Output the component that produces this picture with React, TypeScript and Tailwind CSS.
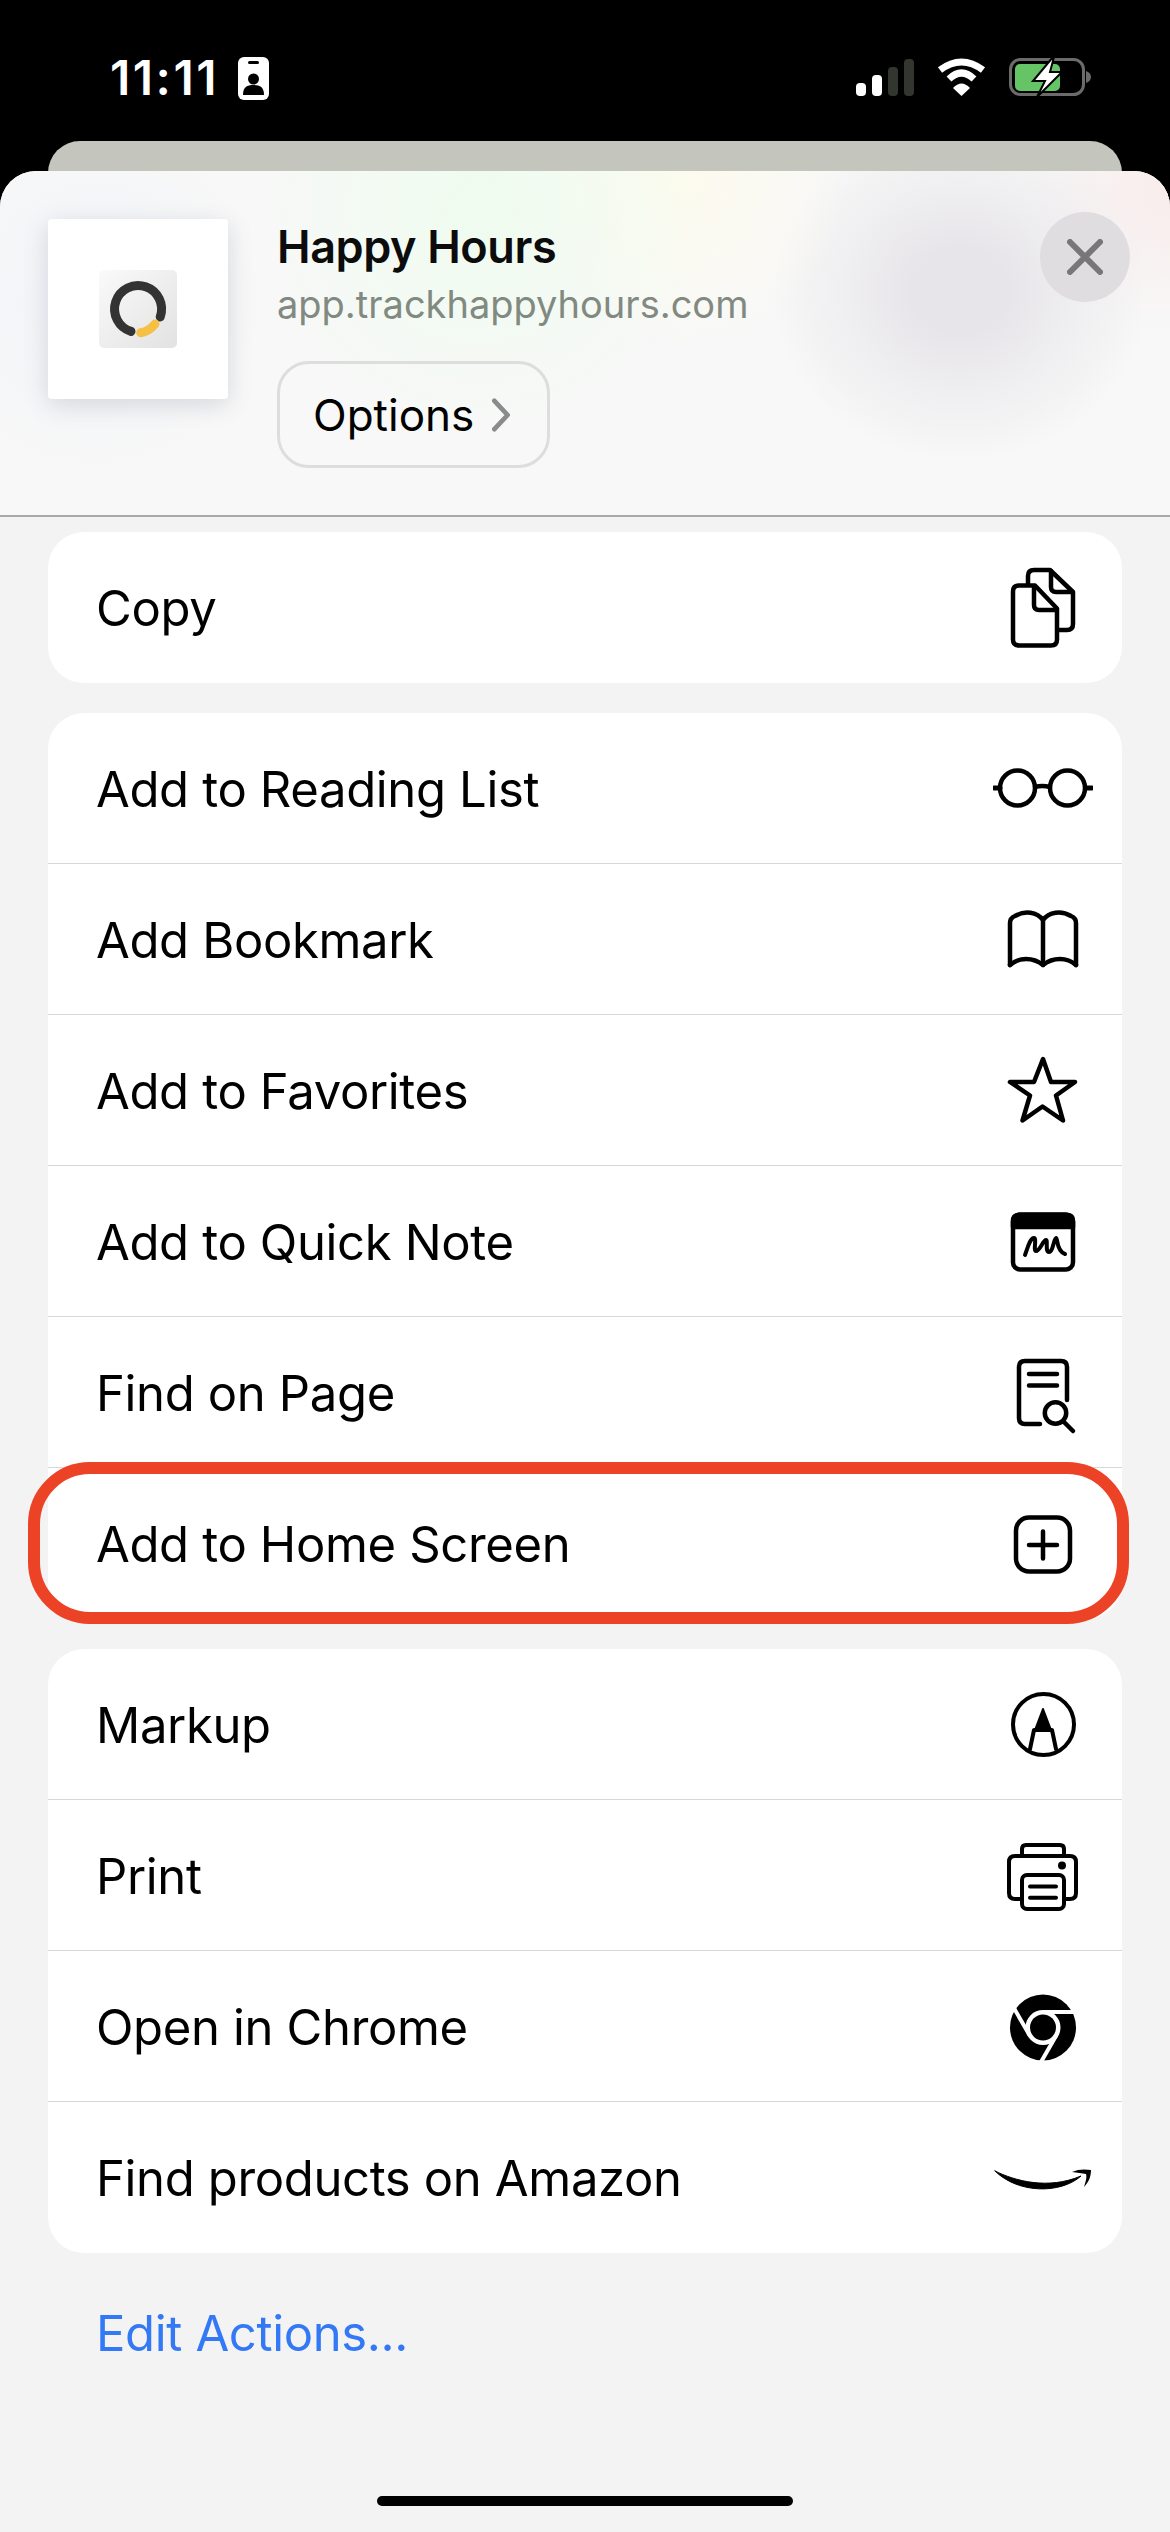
import type { ReactNode } from 'react'

const FONT = "font-['Inter','Liberation_Sans',sans-serif]"

function Icon({ children }: { children: ReactNode }) {
  return (
    <svg viewBox="0 0 100 100" className="h-[100px] w-[100px]" fill="none" stroke="#000" strokeWidth={4.500} strokeLinecap="round" strokeLinejoin="round">
      {children}
    </svg>
  )
}

const CopyIcon = () => (
  <Icon>
    <path d="M35 26v-8q0-6 6-6h16l23 22v32q0 6-6 6h-8" />
    <path d="M58 13v16q0 5 5 5h16" />
    <path d="M26 27.500h16l22 23v31q0 6-6 6H26q-6 0-6-6v-48q0-6 6-6z" />
    <path d="M41 28v19q0 5 5 5h17" />
  </Icon>
)
const GlassesIcon = () => (
  <Icon>
    <circle cx="24.500" cy="50" r="17.500" />
    <circle cx="74.500" cy="50" r="17.500" />
    <path d="M42 49q7-2 15 0" />
    <path d="M1 50h6M93 50h6" strokeWidth={5} />
  </Icon>
)
const BookIcon = () => (
  <Icon>
    <path d="M17 76V34q0-5 5-7c10-6 22-4 28 4 6-8 18-10 28-4q5 2 5 7v42" />
    <path d="M17 76c9-8 23-8 33 0 10-8 24-8 33 0" />
    <path d="M50 31v45" />
  </Icon>
)
const StarIcon = () => (
  <Icon>
    <path d="M50 19l8 23h24L63 55.500l7 25L49.500 66.500 29.500 80.500l7.500-25L17 42h24z" />
  </Icon>
)
const NoteIcon = () => (
  <Icon>
    <rect x="20" y="23.500" width="60" height="55" rx="7" />
    <path d="M20 30q0-6 6-6h48q6 0 6 6v6H20z" fill="#000" />
    <path d="M32 64c3-8 5-17 9-17 3 0-1 13 2 13 4 0 7-11 10-11 2 0-1 12 3 12 4 0 5-14 7-14 2 0 0 13 9 16" strokeWidth={4} />
  </Icon>
)
const FindIcon = () => (
  <Icon>
    <path d="M47 82H32q-6 0-6-6V25q0-6 6-6h36q6 0 6 6v33" />
    <path d="M36 32h28M36 43.500h28" />
    <circle cx="62.500" cy="71" r="10.700" />
    <path d="M70 79l10 10" />
  </Icon>
)
const AddIcon = () => (
  <Icon>
    <rect x="23" y="23.500" width="54" height="54" rx="13" />
    <path d="M50 37.500v27M36 51h28" />
  </Icon>
)
const MarkupIcon = () => (
  <Icon>
    <circle cx="50.500" cy="50.500" r="30.500" strokeWidth={4} />
    <path d="M37 75l4-19h18l4 19" strokeWidth={4} />
    <path d="M42 56l8-21 8 21z" fill="#000" strokeWidth={2} />
  </Icon>
)
const PrintIcon = () => (
  <Icon>
    <path d="M29 30v-6q0-4 4-4h34q4 0 4 4v6" strokeWidth={4} />
    <path d="M27 74h-5q-6 0-6-6V37q0-6 6-6h55q6 0 6 6v31q0 6-6 6h-4" strokeWidth={4} />
    <rect x="29" y="50" width="42" height="34" rx="5" strokeWidth={4} />
    <path d="M37 61.500h26M37 72.800h26" strokeWidth={4} />
    <circle cx="69" cy="40.500" r="4" fill="#000" stroke="none" />
  </Icon>
)
const ChromeIcon = () => (
  <Icon>
    <circle cx="50" cy="51.500" r="33" fill="#000" stroke="none" />
    <circle cx="50" cy="51.500" r="17.500" fill="#fff" stroke="none" />
    <circle cx="50" cy="51.500" r="13" fill="#000" stroke="none" />
    <path d="M50 36h36M63.400 59.250L45.400 90.400M36.600 59.250L18.600 28" stroke="#fff" strokeWidth={4} strokeLinecap="butt" />
  </Icon>
)
const AmazonIcon = () => (
  <Icon>
    <path d="M2 43c20 10 53 19 86 5-20 18-63 18-86-5z" fill="#000" strokeWidth={1} />
    <path d="M79 44c6-3 13-3 19-2 0 6-2 12-7 17 2-6 3-10 2-13-4-1-9-1-14-2z" fill="#000" stroke="none" />
  </Icon>
)

const GROUPS = [
  [{ label: 'Copy', icon: <CopyIcon /> }],
  [
    { label: 'Add to Reading List', icon: <GlassesIcon /> },
    { label: 'Add Bookmark', icon: <BookIcon /> },
    { label: 'Add to Favorites', icon: <StarIcon /> },
    { label: 'Add to Quick Note', icon: <NoteIcon /> },
    { label: 'Find on Page', icon: <FindIcon /> },
    { label: 'Add to Home Screen', icon: <AddIcon />, highlighted: true },
  ],
  [
    { label: 'Markup', icon: <MarkupIcon /> },
    { label: 'Print', icon: <PrintIcon /> },
    { label: 'Open in Chrome', icon: <ChromeIcon /> },
    { label: 'Find products on Amazon', icon: <AmazonIcon /> },
  ],
]

function StatusBar() {
  return (
    <div className="flex h-[141px] items-start justify-between bg-black pl-[110px] pr-[74px] pt-[50px]">
      <div className="flex items-center gap-[19px]">
        <span className="text-[48px] leading-[56px] font-semibold tracking-[2.500px] text-white">11:11</span>
        <svg viewBox="0 0 31 43" className="h-[43px] w-[31px]">
          <rect width="31" height="43" rx="6" fill="#fff" />
          <rect x="10" y="4" width="11" height="3" rx="1.500" fill="#000" />
          <circle cx="15.500" cy="22" r="5.500" fill="#000" />
          <path d="M5 38c0-8 4-10 10.500-10S26 30 26 38z" fill="#000" />
        </svg>
      </div>
      <svg viewBox="0 0 240 42" className="mt-[7px] h-[42px] w-[240px]">
        <rect x="0" y="26" width="10" height="13" rx="4" fill="#fff" />
        <rect x="16" y="18" width="10" height="21" rx="4" fill="#fff" />
        <rect x="32" y="10" width="10" height="29" rx="4" fill="#33352f" />
        <rect x="48" y="2" width="10" height="37" rx="4" fill="#33352f" />
        <path d="M84 13Q105.500 -3 127 13" stroke="#fff" strokeWidth="7" fill="none" />
        <path d="M93 22Q105.500 10 118 22" stroke="#fff" strokeWidth="7" fill="none" />
        <path d="M97 31Q105.500 22 114 31L105.500 39z" fill="#fff" />
        <rect x="154.500" y="2.500" width="73" height="35" rx="10" fill="none" stroke="#6b6c69" strokeWidth="3" />
        <rect x="159" y="7" width="45" height="27" rx="5" fill="#65c466" />
        <path d="M230 14c3 1 5 3 5 6s-2 5-5 6z" fill="#6b6c69" />
        <path d="M197 0L177 24h12l-8 16 25-25h-12l4-15z" fill="#fff" stroke="#000" strokeWidth="2" />
      </svg>
    </div>
  )
}

function SheetHeader() {
  return (
    <header className="relative h-[346px] overflow-hidden rounded-t-[36px] border-b-2 border-[#a9a9a9] bg-[#f8f8f8] bg-[radial-gradient(circle_at_95px_130px,#f0f3f8_0,transparent_170px),radial-gradient(circle_at_480px_40px,#effcef_0,transparent_230px),radial-gradient(circle_at_680px_10px,#fdfbee_0,transparent_170px),radial-gradient(ellipse_190px_170px_at_960px_120px,#e7e5e9_0,#e7e5e9_25%,transparent_100%),radial-gradient(circle_at_1170px_20px,#f8eceb_0,transparent_140px)]">
      <div className="flex pl-[48px] pt-[48px]">
        <div className="flex h-[180px] w-[180px] shrink-0 items-center justify-center rounded-[4px] bg-white shadow-[0_6px_24px_rgba(80,90,110,0.2)]">
          <div className="flex h-[78px] w-[78px] items-center justify-center rounded-[5px] bg-gradient-to-br from-[#fafafa] to-[#e2e2e2]">
            <svg viewBox="0 0 78 78" className="h-[78px] w-[78px]" fill="none" strokeWidth="9" strokeLinecap="round">
              <path d="M32 61.400A23.500 23.500 0 1 1 61.200 46.900" stroke="#333" />
              <path d="M41.700 62.700Q50 61.500 56 54" stroke="#f6c044" />
            </svg>
          </div>
        </div>
        <div className="ml-[49px] flex flex-col items-start">
          <h1 className="mt-[2px] text-[45px] leading-[52px] font-semibold tracking-[-0.4px] text-[#0c0c0c]">Happy Hours</h1>
          <p className="mt-[7px] text-[38px] leading-[48px] text-[#818a80]">app.trackhappyhours.com</p>
          <button type="button" className="mt-[33px] flex h-[107px] w-[273px] items-center rounded-[32px] border-[3px] border-[#dcdedc] pl-[33px] text-[44px] text-black">
            Options
            <svg viewBox="0 0 20 36" className="ml-[17px] h-[34px] w-[20px]" fill="none" stroke="#8a8b8d" strokeWidth="5" strokeLinecap="round" strokeLinejoin="round">
              <path d="M3 3l14 15L3 33" />
            </svg>
          </button>
        </div>
      </div>
      <button type="button" className="absolute right-[40px] top-[41px] flex h-[90px] w-[90px] items-center justify-center rounded-full bg-[#dfdde0]">
        <svg viewBox="0 0 36 36" className="h-[36px] w-[36px]" fill="none" stroke="#77777a" strokeWidth="6" strokeLinecap="round">
          <path d="M3 3l30 30M33 3L3 33" />
        </svg>
      </button>
    </header>
  )
}

function App() {
  return (
    <div className={`flex h-[2532px] w-[1170px] flex-col overflow-hidden bg-black text-black ${FONT}`}>
      <StatusBar />
      <div className="mx-[48px] h-[60px] rounded-t-[32px] bg-[#c4c5bd]" />
      <div className="-mt-[30px] flex flex-1 flex-col rounded-t-[36px] bg-[#f3f3f3]">
        <SheetHeader />
        <main className="flex flex-col gap-[30px] px-[48px] pt-[15px]">
          {GROUPS.map((rows, i) => (
            <section key={i} className="relative rounded-[36px] bg-white">
              {rows.map((row, j) => (
                <div key={row.label} className={`relative flex h-[151px] items-center justify-between pl-[48px] pr-[29px] ${j < rows.length - 1 ? 'border-b-[1.5px] border-[#d8d8d8]' : ''}`}>
                  <span className="pt-[3px] text-[49px] tracking-[-0.35px]">{row.label}</span>
                  {row.icon}
                  {'highlighted' in row && row.highlighted && (
                    <div className="absolute -left-[20px] -right-[7px] -top-[6px] -bottom-[5px] rounded-[62px] border-[12px] border-[#ec4226]" />
                  )}
                </div>
              ))}
            </section>
          ))}
          <a className="mt-[14px] pl-[48px] text-[49px] tracking-[-0.35px] text-[#3379f6]">Edit Actions...</a>
        </main>
        <div className="mt-auto mb-[26px] h-[10px] w-[416px] self-center rounded-full bg-black" />
      </div>
    </div>
  )
}

export default App
